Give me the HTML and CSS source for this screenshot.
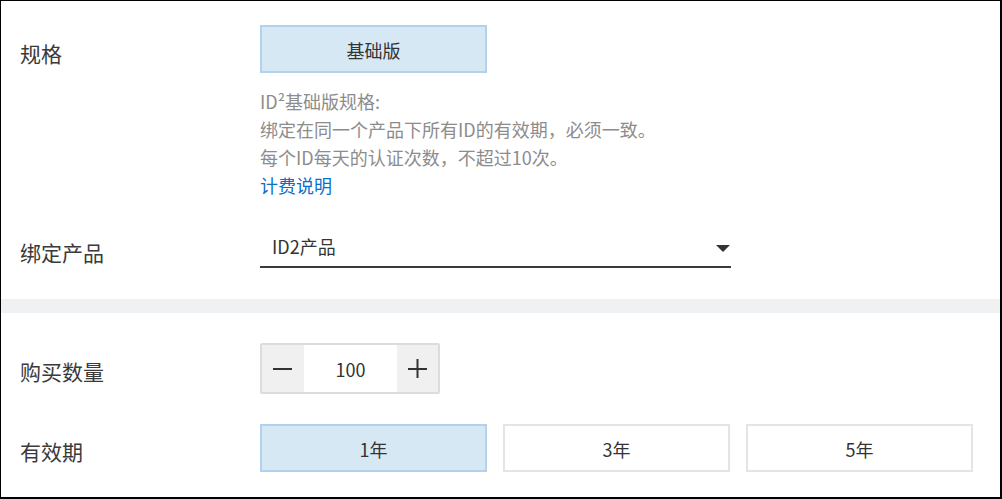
FILE: index.html
```html
<!DOCTYPE html>
<html lang="zh-CN">
<head>
<meta charset="utf-8">
<title>ID² 购买</title>
<link rel="stylesheet" href="styles.css">
</head>
<body>
<div class="frame">
  <section class="section section-top">
    <div class="row row-spec">
      <div class="label label-spec">规格</div>
      <div class="control">
        <div class="opt opt-active">基础版</div>
        <div class="desc">
          <p>ID²基础版规格:</p>
          <p>绑定在同一个产品下所有ID的有效期，必须一致。</p>
          <p>每个ID每天的认证次数，不超过10次。</p>
          <p><a class="link" href="#">计费说明</a></p>
        </div>
      </div>
    </div>
    <div class="row row-product">
      <div class="label label-product">绑定产品</div>
      <div class="control">
        <div class="select">
          <span class="select-text">ID2产品</span>
          <span class="caret"></span>
        </div>
      </div>
    </div>
  </section>
  <div class="band"></div>
  <section class="section section-bottom">
    <div class="row row-qty">
      <div class="label label-qty">购买数量</div>
      <div class="control">
        <div class="stepper">
          <div class="step step-minus">
            <svg width="20" height="4" viewBox="0 0 20 4"><rect x="0" y="1" width="19" height="2" fill="#333"/></svg>
          </div>
          <div class="step-value">100</div>
          <div class="step step-plus">
            <svg width="20" height="20" viewBox="0 0 20 20"><rect x="0" y="9" width="19" height="2" fill="#333"/><rect x="8.5" y="0" width="2" height="19" fill="#333"/></svg>
          </div>
        </div>
      </div>
    </div>
    <div class="row row-term">
      <div class="label label-term">有效期</div>
      <div class="control term-list">
        <div class="opt opt-active">1年</div>
        <div class="opt">3年</div>
        <div class="opt">5年</div>
      </div>
    </div>
  </section>
</div>
</body>
</html>
```

FILE: styles.css
```css
* {
  box-sizing: border-box;
}

html, body {
  margin: 0;
  padding: 0;
  background: #fff;
}

body {
  font-family: "Noto Sans CJK SC", "Noto Sans", sans-serif;
  color: #333;
}

.frame {
  width: 1002px;
  height: 499px;
  border-top: 1px solid #000;
  border-left: 1px solid #000;
  border-right: 2px solid #000;
  border-bottom: 2px solid #000;
  overflow: hidden;
}

.section-top {
  padding-top: 24px;
  padding-bottom: 31px;
}

.section-bottom {
  padding-top: 30px;
}

.band {
  height: 14px;
  background: #f0f1f3;
}

.row {
  display: grid;
  grid-template-columns: 259px 1fr;
  align-items: start;
}

.label {
  padding-left: 19px;
  font-size: 21px;
  line-height: 28px;
  color: #3a3a3a;
}

.label-spec {
  margin-top: 14px;
}

.label-product {
  margin-top: 5px;
}

.label-qty {
  margin-top: 14px;
}

.label-term {
  margin-top: 13px;
}

.row-product {
  margin-top: 34px;
}

.row-term {
  margin-top: 30px;
}

.opt {
  width: 227px;
  height: 48px;
  border: 2px solid #e4e4e4;
  background: #fff;
  display: flex;
  align-items: center;
  justify-content: center;
  font-size: 18px;
  line-height: 28px;
  padding-top: 1px;
  color: #333;
}

.opt-active {
  background: #d7e8f5;
  border-color: #b1d1ee;
}

.desc {
  margin-top: 14px;
  font-size: 18px;
  line-height: 28px;
  color: #8c8c8c;
}

.desc p {
  margin: 0;
}

.link {
  color: #0a6fc8;
  text-decoration: none;
}

.select {
  width: 471px;
  height: 35px;
  border-bottom: 2px solid #3a3a3a;
  padding: 0 1px 0 12px;
  display: flex;
  justify-content: space-between;
  align-items: flex-start;
}

.select-text {
  font-size: 18px;
  line-height: 26px;
  color: #333;
}

.caret {
  margin-top: 12px;
  width: 0;
  height: 0;
  border-left: 7px solid transparent;
  border-right: 7px solid transparent;
  border-top: 7px solid #333;
}

.stepper {
  display: flex;
  width: 180px;
  height: 51px;
  border: 2px solid #dcdcdc;
  border-radius: 2px;
}

.step {
  width: 42px;
  background: #f0f0f0;
  display: flex;
  align-items: center;
  justify-content: center;
}

.step-plus {
  width: 41px;
}

.step-value {
  flex: 1;
  display: flex;
  align-items: center;
  justify-content: center;
  font-size: 18px;
  color: #333;
  background: #fff;
}

.term-list {
  display: flex;
  gap: 16px;
}
```
